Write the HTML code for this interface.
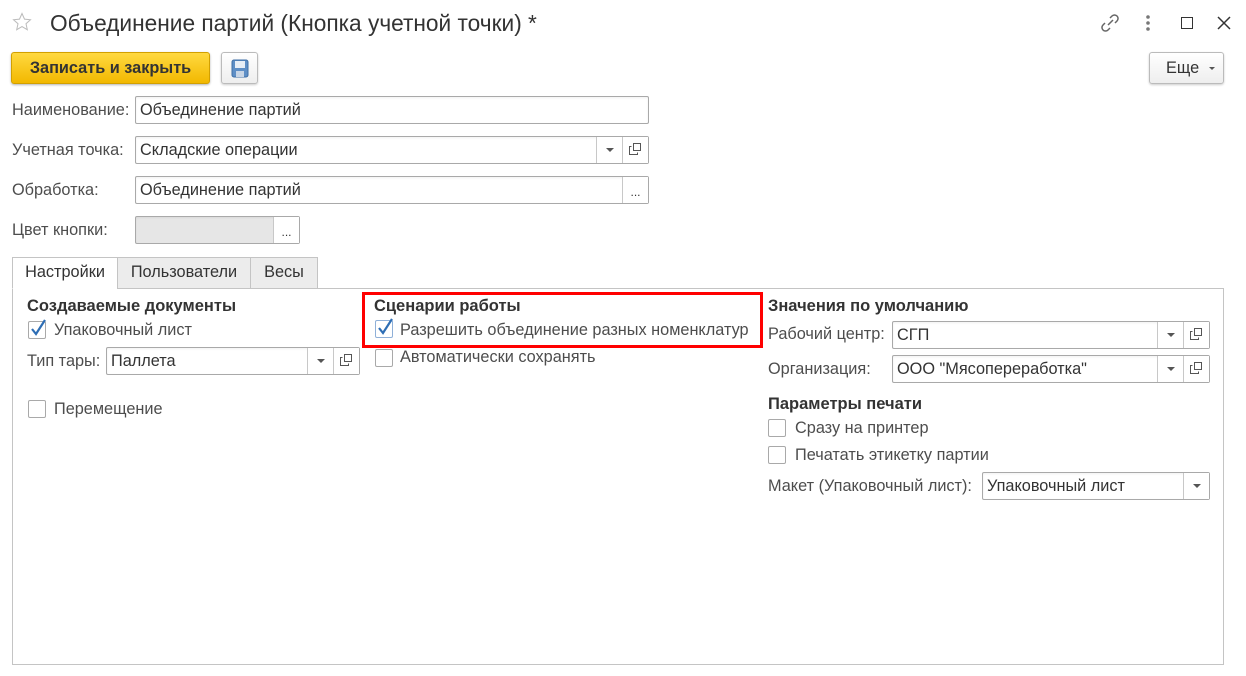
<!DOCTYPE html>
<html><head><meta charset="utf-8">
<style>
*{box-sizing:border-box;margin:0;padding:0}
body{width:1246px;height:676px;background:#fff;font-family:"Liberation Sans",Arial,sans-serif;font-size:16.3px;color:#4d4d4d;position:relative;overflow:hidden}
.a{position:absolute;white-space:nowrap}
.lbl{line-height:19px}
.inp{position:absolute;border:1px solid #a9a9a9;border-radius:2px;background:#fff;height:28px;color:#333;line-height:27px;padding-left:4px;box-shadow:inset 0 1px 2px rgba(0,0,0,0.06)}
.btn{position:absolute;top:0;bottom:0;width:26px;border-left:1px solid #c8c8c8;background:#fff}
.dd::after{content:"";position:absolute;left:9px;top:11px;border-left:4px solid transparent;border-right:4px solid transparent;border-top:4px solid #555}
.dots{text-align:center;font-size:12px;line-height:30px;color:#333;letter-spacing:0}
.op svg{position:absolute;left:6px;top:6px}
.b{font-weight:bold;color:#333;font-size:16.5px}
.cb{position:absolute;width:18px;height:18px;border:1px solid #a9a9a9;border-radius:2px;background:#fff}
.tab{position:absolute;top:257px;height:32px;border:1px solid #c4c4c4;background:#ececec;line-height:29px;text-align:center;color:#333}
</style></head><body>

<svg class="a" style="left:12px;top:12px" width="20" height="20" viewBox="0 0 20 20"><path d="M10 1.5l2.5 5.6 6 .6-4.5 4 1.3 6-5.3-3.1-5.3 3.1 1.3-6-4.5-4 6-.6z" fill="none" stroke="#bbb" stroke-width="1"/></svg>
<div class="a" style="left:50px;top:9px;font-size:22.7px;color:#333;line-height:28px">Объединение партий (Кнопка учетной точки) *</div>

<svg class="a" style="left:1099px;top:12px" width="22" height="22" viewBox="0 0 22 22" fill="none" stroke="#666" stroke-width="1.5"><path d="M9 13l5-5"/><path d="M11 6l2-2a3.5 3.5 0 015 5l-2 2"/><path d="M11 16l-2 2a3.5 3.5 0 01-5-5l2-2"/></svg>
<svg class="a" style="left:1145px;top:13px" width="6" height="20"><circle cx="3" cy="4" r="1.8" fill="#777"/><circle cx="3" cy="10" r="1.8" fill="#777"/><circle cx="3" cy="16" r="1.8" fill="#777"/></svg>
<div class="a" style="left:1181px;top:17px;width:12px;height:12px;border:1.5px solid #333"></div>
<svg class="a" style="left:1216px;top:15px" width="16" height="16"><path d="M2 2l12 12M14 2L2 14" stroke="#333" stroke-width="1.5"/></svg>

<div class="a" style="left:11px;top:52px;width:199px;height:32px;border:1px solid #d2a000;border-radius:3px;background:linear-gradient(#ffd940,#f2b800);box-shadow:0 1px 2px rgba(0,0,0,.3);text-align:center;line-height:30px;font-weight:bold;color:#333">Записать и закрыть</div>
<div class="a" style="left:221px;top:52px;width:37px;height:32px;border:1px solid #bbb;border-radius:3px;background:linear-gradient(#fff,#eee);box-shadow:0 1px 2px rgba(0,0,0,.2)">
<svg style="position:absolute;left:9px;top:6px" width="18" height="19" viewBox="0 0 18 19"><rect x="1" y="1" width="16" height="17" rx="2" fill="#5f8fc6" stroke="#3f6fa6"/><rect x="4" y="2" width="10" height="7" fill="#e8eef6"/><rect x="5" y="12" width="8" height="6" fill="#c9d6e6"/></svg></div>
<div class="a" style="left:1149px;top:52px;width:75px;height:32px;border:1px solid #bbb;border-radius:3px;background:linear-gradient(#fff,#eee);box-shadow:0 1px 2px rgba(0,0,0,.2);line-height:30px;color:#333;padding-left:16px">Еще<span style="position:absolute;left:59px;top:14px;border-left:3px solid transparent;border-right:3px solid transparent;border-top:3px solid #555"></span></div>

<div class="a lbl" style="left:12px;top:101px">Наименование:</div>
<div class="inp" style="left:135px;top:96px;width:514px">Объединение партий</div>
<div class="a lbl" style="left:12px;top:141px">Учетная точка:</div>
<div class="inp" style="left:135px;top:136px;width:514px">Складские операции<div class="btn dd" style="right:26px"></div><div class="btn op" style="right:0"><svg width="12" height="12"><rect x="4.5" y="0.5" width="7" height="7" fill="none" stroke="#555"/><path d="M2.5 3.5h-2v8h8v-2" fill="none" stroke="#555"/></svg></div></div>
<div class="a lbl" style="left:12px;top:181px">Обработка:</div>
<div class="inp" style="left:135px;top:176px;width:514px">Объединение партий<div class="btn dots" style="right:0">...</div></div>
<div class="a lbl" style="left:12px;top:221px">Цвет кнопки:</div>
<div class="inp" style="left:135px;top:216px;width:165px;background:#e6e6e6"><div class="btn dots" style="right:0">...</div></div>

<div class="a" style="left:12px;top:288px;width:1212px;height:377px;border:1px solid #c4c4c4"></div>
<div class="tab" style="left:12px;width:106px;background:#fff;border-bottom-color:#fff">Настройки</div>
<div class="tab" style="left:117px;width:134px">Пользователи</div>
<div class="tab" style="left:250px;width:68px">Весы</div>

<div class="a lbl b" style="left:27px;top:297px">Создаваемые документы</div>
<div class="cb" style="left:28px;top:321px"></div>
<svg class="a" style="left:29px;top:319px" width="18" height="18"><path d="M3 10l4 5 9-14" fill="none" stroke="#2e6eb5" stroke-width="2.2"/></svg>
<div class="a lbl" style="left:54px;top:321px">Упаковочный лист</div>
<div class="a lbl" style="left:27px;top:352px">Тип тары:</div>
<div class="inp" style="left:106px;top:347px;width:254px">Паллета<div class="btn dd" style="right:26px"></div><div class="btn op" style="right:0"><svg width="12" height="12"><rect x="4.5" y="0.5" width="7" height="7" fill="none" stroke="#555"/><path d="M2.5 3.5h-2v8h8v-2" fill="none" stroke="#555"/></svg></div></div>
<div class="cb" style="left:28px;top:400px"></div>
<div class="a lbl" style="left:54px;top:400px">Перемещение</div>

<div class="a" style="left:362px;top:292px;width:401px;height:56px;border:3px solid #f00"></div>
<div class="a lbl b" style="left:374px;top:297px">Сценарии работы</div>
<div class="cb" style="left:375px;top:320px;border-color:#8fb0d8"></div>
<svg class="a" style="left:376px;top:318px" width="18" height="18"><path d="M3 10l4 5 9-14" fill="none" stroke="#2e6eb5" stroke-width="2.2"/></svg>
<div class="a lbl" style="left:400px;top:321px">Разрешить объединение разных номенклатур</div>
<div class="cb" style="left:375px;top:349px"></div>
<div class="a lbl" style="left:400px;top:348px">Автоматически сохранять</div>

<div class="a lbl b" style="left:768px;top:297px">Значения по умолчанию</div>
<div class="a lbl" style="left:768px;top:325px">Рабочий центр:</div>
<div class="inp" style="left:892px;top:321px;width:318px">СГП<div class="btn dd" style="right:26px"></div><div class="btn op" style="right:0"><svg width="12" height="12"><rect x="4.5" y="0.5" width="7" height="7" fill="none" stroke="#555"/><path d="M2.5 3.5h-2v8h8v-2" fill="none" stroke="#555"/></svg></div></div>
<div class="a lbl" style="left:768px;top:360px">Организация:</div>
<div class="inp" style="left:892px;top:355px;width:318px">ООО "Мясопереработка"<div class="btn dd" style="right:26px"></div><div class="btn op" style="right:0"><svg width="12" height="12"><rect x="4.5" y="0.5" width="7" height="7" fill="none" stroke="#555"/><path d="M2.5 3.5h-2v8h8v-2" fill="none" stroke="#555"/></svg></div></div>
<div class="a lbl b" style="left:768px;top:395px">Параметры печати</div>
<div class="cb" style="left:768px;top:419px"></div>
<div class="a lbl" style="left:795px;top:419px">Сразу на принтер</div>
<div class="cb" style="left:768px;top:446px"></div>
<div class="a lbl" style="left:795px;top:446px">Печатать этикетку партии</div>
<div class="a lbl" style="left:768px;top:477px">Макет (Упаковочный лист):</div>
<div class="inp" style="left:982px;top:472px;width:228px">Упаковочный лист<div class="btn dd" style="right:0"></div></div>

</body></html>
